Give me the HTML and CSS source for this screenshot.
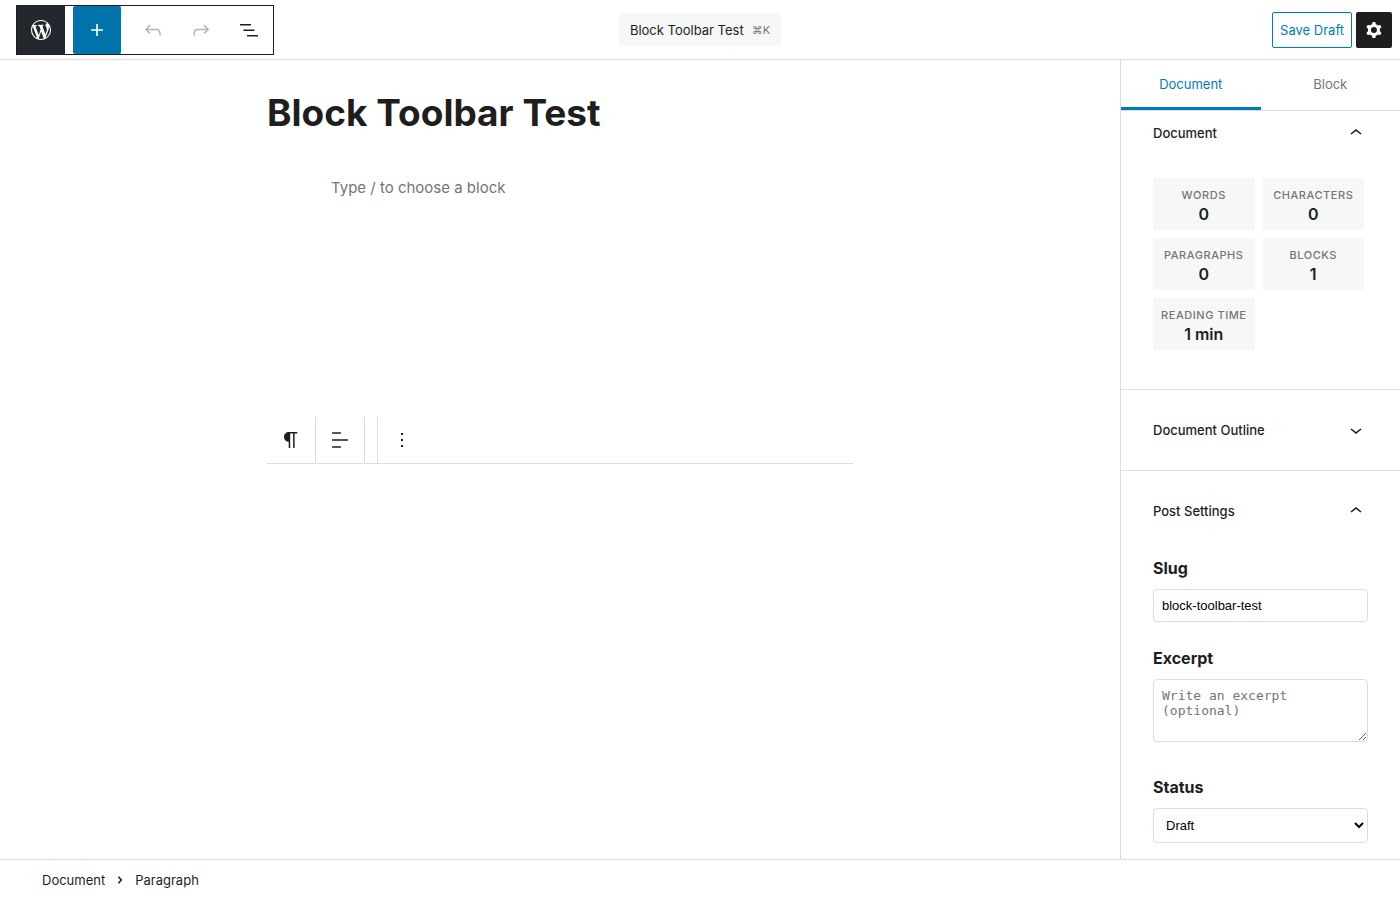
FILE: index.html
```html
<!DOCTYPE html>
<html lang="en">
<head>
<meta charset="utf-8">
<meta name="viewport" content="width=device-width, initial-scale=1">
<title>Block Toolbar Test</title>
<link rel="stylesheet" href="styles.css">
</head>
<body>
<div class="editor">
  <header class="header">
    <div class="header-tools" role="toolbar" aria-label="Document tools">
      <a class="tool tool-logo" href="#" aria-label="View Posts">
        <svg class="logo" viewBox="0 0 20 20" aria-hidden="true"><path d="M20 10c0-5.51-4.49-10-10-10C4.48 0 0 4.490 0 10c0 5.520 4.480 10 10 10 5.510 0 10-4.480 10-10zM7.780 15.370L4.370 6.220c.55-.02 1.170-.08 1.170-.08.5-.06.44-1.130-.06-1.110 0 0-1.450.11-2.370.11-.18 0-.37 0-.58-.01C4.120 2.690 6.870 1.110 10 1.110c2.330 0 4.450.87 6.050 2.340-.68-.11-1.650.39-1.650 1.580 0 .74.45 1.360.9 2.100.35.61.55 1.360.55 2.460 0 1.490-1.400 5-1.400 5l-3.030-8.370c.54-.02.82-.17.82-.17.5-.05.44-1.250-.06-1.220 0 0-1.440.12-2.380.12-.87 0-2.330-.12-2.330-.12-.5-.03-.56 1.200-.06 1.220l.92.08 1.260 3.410zM17.410 10c.24-.64.74-1.870.43-4.250.7 1.290 1.050 2.710 1.050 4.250 0 3.290-1.730 6.240-4.400 7.780.97-2.590 1.940-5.200 2.920-7.780zM6.100 18.090C3.120 16.650 1.110 13.530 1.110 10c0-1.300.23-2.480.72-3.590C3.250 10.300 4.670 14.200 6.100 18.090zm4.030-6.630l2.580 6.980c-.86.29-1.760.45-2.710.45-.79 0-1.570-.11-2.290-.33.81-2.380 1.620-4.740 2.420-7.100z"/></svg>
      </a>
      <button class="tool tool-add" type="button" aria-label="Add block">
        <svg class="icon" viewBox="0 0 24 24" aria-hidden="true"><path d="M18 11.2h-5.2V6h-1.600v5.200H6v1.600h5.200V18h1.600v-5.200H18z"/></svg>
      </button>
      <button class="tool tool-history" type="button" aria-label="Undo" disabled>
        <svg class="icon" viewBox="0 0 24 24" aria-hidden="true"><path d="M18.300 11.700c-.6-.6-1.400-.9-2.300-.9H6.700l2.900-3.300-1.100-1-4.500 5L8.500 16l1-1-2.700-2.700H16c.5 0 .9.2 1.300.5 1 1 1 3.400 1 4.500v.3h1.500v-.2c0-1.500 0-4.300-1.500-5.700z"/></svg>
      </button>
      <button class="tool tool-history" type="button" aria-label="Redo" disabled>
        <svg class="icon" viewBox="0 0 24 24" aria-hidden="true"><path d="M15.600 6.500l-1.100 1 2.900 3.300H8c-.9 0-1.700.3-2.300.9-1.400 1.500-1.400 4.200-1.400 5.600v.2h1.500v-.3c0-1.100 0-3.500 1-4.500.3-.3.7-.5 1.300-.5h9.200L14.500 15l1.100 1.100 4.600-4.600-4.600-5z"/></svg>
      </button>
      <button class="tool" type="button" aria-label="List view">
        <svg class="icon" viewBox="0 0 24 24" aria-hidden="true"><path d="M3 6h11v1.500H3V6Zm3.500 5.500h11V13h-11v-1.500ZM21 17H10v1.500h11V17Z"/></svg>
      </button>
    </div>
    <button class="command" type="button"><span>Block Toolbar Test</span><span class="shortcut">⌘K</span></button>
    <div class="header-actions">
      <button class="save" type="button">Save Draft</button>
      <button class="settings" type="button" aria-label="Settings" aria-pressed="true">
        <svg class="icon" viewBox="0 0 24 24" aria-hidden="true"><path fill-rule="evenodd" d="M10.289 4.836A1 1 0 0111.275 4h1.306a1 1 0 01.987.836l.244 1.466c.787.26 1.503.679 2.108 1.218l1.393-.522a1 1 0 011.216.437l.653 1.130a1 1 0 01-.23 1.273l-1.148.944a6.025 6.025 0 010 2.435l1.149.946a1 1 0 01.23 1.272l-.653 1.130a1 1 0 01-1.216.437l-1.394-.522c-.605.54-1.320.958-2.108 1.218l-.244 1.466a1 1 0 01-.987.836h-1.306a1 1 0 01-.986-.836l-.244-1.466a5.995 5.995 0 01-2.108-1.218l-1.394.522a1 1 0 01-1.217-.436l-.653-1.131a1 1 0 01.23-1.272l1.149-.946a6.026 6.026 0 010-2.435l-1.148-.944a1 1 0 01-.23-1.272l.653-1.131a1 1 0 011.217-.437l1.393.522a5.994 5.994 0 012.108-1.218l.244-1.466zM14.929 12a3 3 0 11-6 0 3 3 0 016 0z"/></svg>
      </button>
    </div>
  </header>

  <div class="workspace">
    <main class="canvas">
      <div class="column">
        <h1 class="post-title">Block Toolbar Test</h1>
        <p class="placeholder">Type / to choose a block</p>
        <div class="block-toolbar" role="toolbar" aria-label="Block tools">
          <div class="group">
            <button class="block-tool" type="button" aria-label="Paragraph">
              <svg class="icon" viewBox="0 0 24 24" aria-hidden="true"><path d="M18.300 4H9.900v-.1l-.9.2c-2.300.4-4 2.400-4 4.800s1.700 4.400 4 4.800l.7.1V20h1.500V5.500h2.900V20h1.500V5.500h2.700V4z"/></svg>
            </button>
          </div>
          <div class="group">
            <button class="block-tool" type="button" aria-label="Align text">
              <svg class="icon" viewBox="0 0 24 24" aria-hidden="true"><path d="M4 19.800h8.900v-1.500H4v1.500zm8.900-15.600H4v1.500h8.900V4.200zm-8.900 7v1.500h16v-1.500H4z"/></svg>
            </button>
          </div>
          <div class="group group-empty"></div>
          <div class="group">
            <button class="block-tool" type="button" aria-label="Options">
              <svg class="icon" viewBox="0 0 24 24" aria-hidden="true"><path d="M13 19h-2v-2h2v2zm0-6h-2v-2h2v2zm0-6h-2V5h2v2z"/></svg>
            </button>
          </div>
        </div>
      </div>
    </main>

    <aside class="sidebar">
      <div class="tabs" role="tablist">
        <button class="tab tab-active" type="button" role="tab" aria-selected="true">Document</button>
        <button class="tab" type="button" role="tab" aria-selected="false">Block</button>
      </div>
      <div class="panels">
        <section class="panel panel-first">
          <button class="panel-toggle" type="button" aria-expanded="true">Document
            <svg class="icon" viewBox="0 0 24 24" aria-hidden="true"><path d="M6.500 12.400L12 8l5.500 4.400-.9 1.200L12 10l-4.500 3.600-1-1.200z"/></svg>
          </button>
          <dl class="stats">
            <div class="stat"><dt>Words</dt><dd>0</dd></div>
            <div class="stat"><dt>Characters</dt><dd>0</dd></div>
            <div class="stat"><dt>Paragraphs</dt><dd>0</dd></div>
            <div class="stat"><dt>Blocks</dt><dd>1</dd></div>
            <div class="stat"><dt>Reading time</dt><dd>1 min</dd></div>
          </dl>
        </section>
        <section class="panel">
          <button class="panel-toggle" type="button" aria-expanded="false">Document Outline
            <svg class="icon" viewBox="0 0 24 24" aria-hidden="true"><path d="M17.500 11.600L12 16l-5.500-4.400.9-1.200L12 14l4.500-3.600 1 1.200z"/></svg>
          </button>
        </section>
        <section class="panel">
          <button class="panel-toggle" type="button" aria-expanded="true">Post Settings
            <svg class="icon" viewBox="0 0 24 24" aria-hidden="true"><path d="M6.500 12.400L12 8l5.500 4.400-.9 1.200L12 10l-4.500 3.600-1-1.200z"/></svg>
          </button>
          <div class="fields">
            <div class="field">
              <label for="slug">Slug</label>
              <input class="control" id="slug" type="text" value="block-toolbar-test">
            </div>
            <div class="field field-long">
              <label for="excerpt">Excerpt</label>
              <textarea class="control" id="excerpt" rows="3" placeholder="Write an excerpt (optional)"></textarea>
            </div>
            <div class="field">
              <label for="status">Status</label>
              <select class="control" id="status"><option>Draft</option><option>Published</option></select>
            </div>
          </div>
        </section>
      </div>
    </aside>
  </div>

  <footer class="footer">
    <nav class="breadcrumb" aria-label="Block breadcrumb">
      <button class="crumb" type="button">Document</button>
      <svg class="crumb-arrow" viewBox="0 0 6 8" aria-hidden="true"><path d="M1.500 .8L4.300 4L1.500 7.200"/></svg>
      <span class="crumb">Paragraph</span>
    </nav>
  </footer>
</div>
</body>
</html>
```
FILE: styles.css
```css
* { box-sizing: border-box; }

body {
  margin: 0;
  color: #1e1e1e;
  background: #fff;
  font: 13px/20px Inter, "Liberation Sans", sans-serif;
}

button {
  margin: 0;
  padding: 0;
  border: 0;
  background: none;
  color: inherit;
  font: inherit;
  cursor: pointer;
}

.icon { display: block; width: 24px; height: 24px; fill: currentColor; }

.editor {
  display: grid;
  grid-template-rows: auto minmax(0, 1fr) auto;
  height: 100vh;
}

.header {
  display: grid;
  grid-template-columns: 1fr auto 1fr;
  align-items: center;
  height: 60px;
  padding: 0 8px 0 16px;
  border-bottom: 1px solid #ddd;
}

.header-tools {
  display: flex;
  justify-self: start;
  border: 1px solid #1e1e1e;
}

.tool {
  display: flex;
  align-items: center;
  justify-content: center;
  width: 48px;
  height: 48px;
}

.tool-logo { background: #23282e; color: #fff; }
.logo { display: block; width: 20px; height: 20px; fill: currentColor; }
.tool-add { margin: 0 8px; border-radius: 2px; background: #0073aa; color: #fff; }
.tool-history { color: #b5b5b5; }

.command {
  display: flex;
  align-items: center;
  gap: 8px;
  margin-right: 8px;
  height: 33px;
  padding: 0 11px;
  border-radius: 2px;
  background: #f6f7f7;
}

.shortcut { color: #757575; font-size: 11px; }

.header-actions { display: flex; gap: 4px; justify-self: end; }

.save {
  height: 36px;
  padding: 0 7px;
  border: 1px solid #007cba;
  border-radius: 2px;
  color: #007cba;
}

.settings {
  display: flex;
  align-items: center;
  justify-content: center;
  width: 36px;
  height: 36px;
  border-radius: 2px;
  background: #1e1e1e;
  color: #fff;
}

.workspace { display: grid; grid-template-columns: minmax(0, 1fr) 280px; }

.canvas { padding: 28px 24px 0; }
.column { max-width: 586px; margin: 0 auto; }

.post-title {
  margin: 0;
  font-size: 37px;
  line-height: 50px;
  font-weight: 700;
}

.placeholder {
  margin: 36px 64px 0;
  color: #757575;
  font-size: 15px;
  line-height: 28px;
}

.block-toolbar {
  display: flex;
  margin-top: 215px;
  border-bottom: 1px solid #ddd;
}

.group { border-right: 1px solid #ddd; }
.group:last-child { border-right: 0; }
.group-empty { width: 13px; }

.block-tool {
  display: flex;
  align-items: center;
  justify-content: center;
  width: 48px;
  height: 46px;
}

.sidebar {
  display: flex;
  flex-direction: column;
  min-height: 0;
  border-left: 1px solid #ddd;
}

.tabs { display: flex; border-bottom: 1px solid #ddd; }

.tab {
  flex: 1;
  height: 50px;
  border-bottom: 3px solid transparent;
  color: #757575;
}

.tab-active { border-bottom-color: #007cba; color: #007cba; }

.panels { flex: 1; min-height: 0; overflow: auto; scrollbar-width: none; }

.panel { padding: 16px 32px; border-bottom: 1px solid #ddd; }
.panel:last-child { border-bottom: 0; }
.panel-first { padding-top: 0; padding-bottom: 39px; }

.panel-toggle {
  display: flex;
  align-items: center;
  justify-content: space-between;
  width: 100%;
  height: 48px;
  font-weight: 500;
}

.panel-first .panel-toggle { height: 44px; }

.stats {
  display: grid;
  grid-template-columns: 1fr 1fr;
  gap: 8px;
  margin: 23px 4px 0 0;
}

.stat {
  padding: 8px 0 6px;
  border-radius: 2px;
  background: #f6f7f7;
  text-align: center;
}

.stat dt {
  color: #757575;
  font-size: 11px;
  line-height: 18px;
  font-weight: 500;
  letter-spacing: 0.05em;
  text-transform: uppercase;
  white-space: nowrap;
}

.stat dd { margin: 0; font-size: 16px; line-height: 20px; font-weight: 600; }

.fields { display: grid; gap: 24px; margin-top: 21px; }
.field { display: flex; flex-direction: column; gap: 9px; }
.field-long { padding-bottom: 9px; }
.field label { font-size: 16px; line-height: 24px; font-weight: 700; }

.control {
  width: 100%;
  margin: 0;
  padding: 8px;
  border: 1px solid #ddd;
  border-radius: 4px;
  background: #fff;
  color: #000;
  font: 13px/15px "Liberation Sans", sans-serif;
}

.control::placeholder { color: #757575; }
textarea.control { font-family: "DejaVu Sans Mono", monospace; resize: vertical; }
select.control { height: 35px; }

.footer { border-top: 1px solid #ddd; padding: 0 42px; }
.breadcrumb { display: flex; align-items: center; gap: 12px; height: 40px; }
.crumb-arrow {
  width: 6px;
  height: 8px;
  fill: none;
  stroke: #1e1e1e;
  stroke-width: 1.5;
}
```
